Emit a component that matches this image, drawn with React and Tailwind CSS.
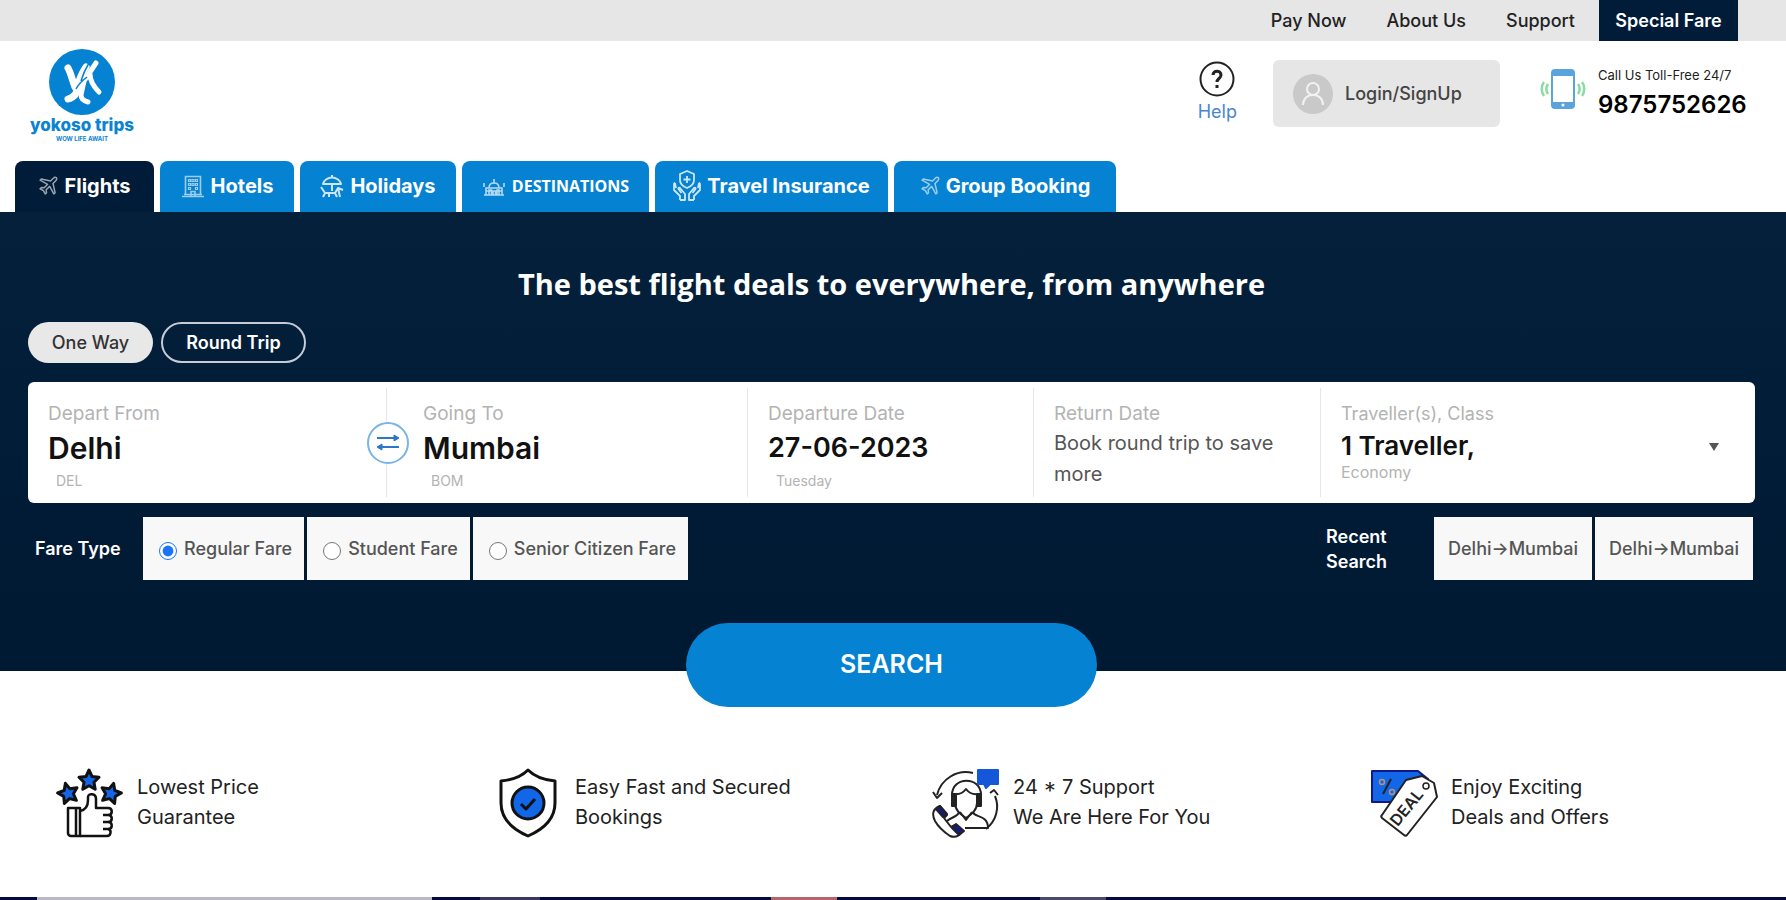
import { useState } from 'react';

const topLinks = ['Pay Now', 'About Us', 'Support'];

const tabs = [
  { label: 'Flights', icon: PlaneIcon, width: 'w-[139px]' },
  { label: 'Hotels', icon: HotelIcon, width: 'w-[134px]' },
  { label: 'Holidays', icon: HolidayIcon, width: 'w-[156px]' },
  { label: 'DESTINATIONS', icon: CityIcon, width: 'w-[187px]', narrow: true },
  { label: 'Travel Insurance', icon: InsuranceIcon, width: 'w-[233px]' },
  { label: 'Group Booking', icon: PlaneIcon, width: 'w-[222px]' },
];

const fares = ['Regular Fare', 'Student Fare', 'Senior Citizen Fare'];

const features = [
  { icon: ThumbIcon, lines: ['Lowest Price', 'Guarantee'] },
  { icon: ShieldIcon, lines: ['Easy Fast and Secured', 'Bookings'] },
  { icon: SupportIcon, lines: ['24 * 7 Support', 'We Are Here For You'] },
  { icon: DealIcon, lines: ['Enjoy Exciting', 'Deals and Offers'] },
];

function PlaneIcon() {
  return (
    <svg viewBox="0 0 24 24" className="w-5 h-5 shrink-0 opacity-60" fill="none" stroke="currentColor" strokeWidth="1.8" strokeLinejoin="round">
      <path d="M22 2c-1.200-.8-2.600-.3-3.600.7L15 6 4 3.500 2.500 5l9 5-4 4.200-3.500-.4L2.500 15.300l4 2.200 2.200 4 1.500-1.500-.4-3.500 4.200-4 5 9 1.500-1.500L18 9l3.300-3.400c1-1 1.500-2.400.7-3.600z" />
    </svg>
  );
}

function HotelIcon() {
  return (
    <svg viewBox="0 0 24 24" className="w-6 h-6 shrink-0 opacity-60" fill="none" stroke="currentColor" strokeWidth="1.6">
      <path d="M4.500 21V2.500h15V21M1 22.500h22M10 22v-4.500h4V22M3 20.500h18" />
      <path d="M7.500 5.500h2v2h-2zM11 5.500h2v2h-2zM14.500 5.500h2v2h-2zM7.500 9.500h2v2h-2zM11 9.500h2v2h-2zM14.500 9.500h2v2h-2zM7.500 13.500h2v2h-2zM14.500 13.500h2v2h-2z" strokeWidth="1.200" />
    </svg>
  );
}

function HolidayIcon() {
  return (
    <svg viewBox="0 0 24 24" className="w-6 h-6 shrink-0 opacity-80" fill="none" stroke="currentColor" strokeWidth="2" strokeLinejoin="round">
      <path d="M3 10c1-4 5-6.500 9-6.500s8 2.500 9 6.500zM12 1v3M12 10v7" />
      <path d="M1 13l4 6h10l3-5 5 2M5 19l-2 4M9 19v4M15 19l2 4M18 14l2 9" />
    </svg>
  );
}

function CityIcon() {
  return (
    <svg viewBox="0 0 24 24" className="w-6 h-6 shrink-0 opacity-70" fill="none" stroke="currentColor" strokeWidth="1.6">
      <path d="M2 21h20M4 21v-7h16v7M7 21v-5h2.500v5M11 21v-4h2.500v4M15 21v-5h2v5M4 17h16M7 14c0-3 2-5 5-5s5 2 5 5M12 9V5M2 13V9M22 13V9" />
    </svg>
  );
}

function InsuranceIcon() {
  return (
    <svg viewBox="0 0 28 32" className="w-7 h-8 shrink-0 opacity-80" fill="none" stroke="currentColor" strokeWidth="1.800" strokeLinejoin="round">
      <path d="M14 1l7 3v6c0 4-3 6.500-7 8-4-1.500-7-4-7-8V4zM14 6v7M10.500 9.500h7" />
      <path d="M2 13c-1 0-1 1-1 2v5l6 6v4M7 30h5v-6l-5-6c-1-1-2 0-1.500 1l3 4M2 13l1 5M26 13c1 0 1 1 1 2v5l-6 6v4M21 30h-5v-6l5-6c1-1 2 0 1.500 1l-3 4M26 13l-1 5" />
    </svg>
  );
}

function Logo() {
  return (
    <a href="#" className="flex flex-col items-center w-[108px] text-[#0a83d3]">
      <svg viewBox="0 0 66 66" className="w-[66px] h-[66px]" aria-hidden="true">
        <circle cx="33" cy="33" r="33" fill="#0682d3" />
        <g fill="none" stroke="#fff" strokeLinecap="round" strokeLinejoin="round">
          <path d="M19 19c3 5 4 12 7 19M37 18c-4 6-7 12-8 19-1 7-3 11-10 13" strokeWidth="7" />
          <path d="M47 14L35 32l-3 14M32 46c0 4 3 6 7 7M41 25c0 7 3 12 9 18" strokeWidth="5" />
        </g>
        <path d="M40 14c-3 5-6 11-8 18M27 40c2-4 7-9 11-12" fill="none" stroke="#0682d3" strokeWidth="1.500" />
      </svg>
      <span className="text-[17px] leading-[20px] font-extrabold whitespace-nowrap">yokoso trips</span>
      <span className="text-[6px] leading-[8px] font-bold whitespace-nowrap">WOW LIFE AWAIT</span>
    </a>
  );
}

function PhoneIcon() {
  return (
    <svg viewBox="0 0 46 42" className="w-[46px] h-[42px] shrink-0" fill="none" aria-hidden="true">
      <rect x="12" y="2" width="22" height="38" rx="3" stroke="#5ba3dc" strokeWidth="2" />
      <path d="M12 5a3 3 0 013-3h16a3 3 0 013 3v3H12zM12 34h22v3a3 3 0 01-3 3H15a3 3 0 01-3-3z" fill="#5ba3dc" />
      <circle cx="23" cy="37" r="1.500" fill="#fff" />
      <path d="M8 16c-2 3-2 7 0 10M4 14c-3 4-3 10 0 14M38 16c2 3 2 7 0 10M42 14c3 4 3 10 0 14" stroke="#8adca0" strokeWidth="2.500" />
    </svg>
  );
}

function ThumbIcon() {
  const star = 'M0-10l3 6.500 7 .8-5 4.900 1.200 7L0 5.800-6.200 9.200-5 2.200-10-2.700l7-.8z';
  return (
    <svg viewBox="0 0 68 70" className="w-[68px] h-[70px] shrink-0" fill="none" stroke="#111" strokeWidth="2.500" strokeLinejoin="round" aria-hidden="true">
      <g fill="#1266e8" strokeWidth="3">
        <path d={star} transform="translate(33 12)" />
        <path d={star} transform="translate(12 25) rotate(-15)" />
        <path d={star} transform="translate(55 25) rotate(15)" />
      </g>
      <path d="M12 40h12v28H15a3 3 0 01-3-3zM20 40v28" />
      <path d="M24 43c5-1 8-5 8-11v-3c0-4 8-4 8 2v9h12c5 0 5 7 0 7 5 0 5 7 0 7 5 0 5 7 0 7 4 1 3 7-1 7H24M47 47h5M47 54h5M47 61h5" />
    </svg>
  );
}

function ShieldIcon() {
  return (
    <svg viewBox="0 0 60 70" className="w-[60px] h-[70px] shrink-0" fill="none" stroke="#111" strokeWidth="3" strokeLinejoin="round" aria-hidden="true">
      <path d="M30 2c7 7 16 10 27 11v22c0 15-11 26-27 33C14 61 3 50 3 35V13C14 12 23 9 30 2z" />
      <circle cx="30" cy="35" r="16" fill="#1266e8" />
      <path d="M23 36l5 5 9-10" />
    </svg>
  );
}

function SupportIcon() {
  return (
    <svg viewBox="0 0 70 70" className="w-[70px] h-[70px] shrink-0" fill="none" stroke="#222" strokeWidth="2" strokeLinejoin="round" aria-hidden="true">
      <path d="M42 5C26 1 10 11 6 27M2 24l4 6 5-5M64 28c5 12 1 25-9 33M59 25l4-3 4 5" />
      <path d="M21 33v-6c0-19 29-19 29 0v6M22 26c5 1 10-1 13-5 3 4 8 6 13 5" />
      <path d="M24 27v8c0 7 5 11 11 15 6-4 11-8 11-15v-8" />
      <path d="M21 26h4v12h-4zM46 26h4v12h-4z" fill="#222" />
      <path d="M28 44c-1 5-8 5-12 9M42 44c1 6 15 2 15 16H34M29 44l6 8 6-8" />
      <path d="M9 38c-8 3-8 9-5 15 4 7 9 11 15 15 5 2 9 0 12-4l-7-7-4 2-7-9 3-3z" fill="#fff" />
      <path d="M5 41l4-3 7 8-4 3zM21 60l4-4 8 7-5 4z" fill="#131b82" />
      <path d="M47 2h20v14h-8l-4 4-2-4h-6z" fill="#1457d8" stroke="#1457d8" />
    </svg>
  );
}

function DealIcon() {
  return (
    <svg viewBox="0 0 70 70" className="w-[70px] h-[70px] shrink-0" fill="none" stroke="#222" strokeWidth="1.500" strokeLinejoin="round" aria-hidden="true">
      <path d="M3 3h46l10 8v23H3z" fill="#1266e8" stroke="#10188a" strokeWidth="2" />
      <path d="M22 11L14 26" strokeWidth="2" />
      <circle cx="13" cy="14" r="2.500" stroke="#b8917c" />
      <circle cx="23" cy="24" r="2.500" stroke="#b8917c" />
      <path d="M37 12l16-4 12 7 3 14-30 38c-1 1-2 1-3 0L13 50c-1-1-1-2 0-3z" fill="#fff" strokeWidth="2" />
      <circle cx="57" cy="18" r="3" />
      <text x="42" y="43" transform="rotate(-51 42 43)" textAnchor="middle" fontSize="16" fontWeight="600" fill="#222" stroke="none">DEAL</text>
    </svg>
  );
}

function Field({ label, value, sub, className = '', size = 'text-[30px]' }) {
  return (
    <label className={`flex flex-col my-1.5 pt-4 pl-5 border-r border-gray-200 min-w-0 ${className}`}>
      <span className="text-[19px] leading-[20px] text-[#b3b3b3]">{label}</span>
      <input className={`w-full mt-2 leading-[32px] h-8 font-semibold text-[#111] outline-none ${size}`} defaultValue={value} />
      <span className="pl-2 mt-2 text-[14px] leading-[18px] text-[#b3b3b3]">{sub}</span>
    </label>
  );
}

export default function App() {
  const [tab, setTab] = useState('Flights');
  const [trip, setTrip] = useState('One Way');

  return (
    <div className="min-h-screen overflow-hidden bg-white font-['Inter',sans-serif] text-[#222]">
      <div className="flex items-center justify-end h-[41px] pr-12 bg-[#e6e6e6] text-[18px] font-medium">
        <nav className="flex gap-10 pr-6">
          {topLinks.map(link => (
            <a key={link} href="#" className="whitespace-nowrap">{link}</a>
          ))}
        </nav>
        <a href="#" className="flex items-center justify-center w-[139px] h-full bg-[#011c38] text-white font-semibold">
          Special Fare
        </a>
      </div>

      <header className="flex items-start justify-between h-[120px] pl-7 pr-9 pt-2">
        <Logo />
        <div className="flex items-start pt-[11px]">
          <a href="#" className="flex flex-col items-center text-[18px] leading-[20px] text-[#4a86cf]">
            <svg viewBox="0 0 36 38" className="w-9 h-[38px]" fill="none" stroke="#222" aria-hidden="true">
              <circle cx="18" cy="19" r="16.500" strokeWidth="2" />
              <path d="M14 15c0-5 8-5 8 0 0 3.500-4 3.500-4 7M18 25v3" strokeWidth="3" />
            </svg>
            <span className="mt-1">Help</span>
          </a>
          <button className="flex items-center gap-3 w-[227px] h-[67px] ml-9 pl-5 rounded-md bg-[#e6e6e6] text-[18px] font-medium text-[#444]">
            <svg viewBox="0 0 40 40" className="w-10 h-10" fill="none" stroke="#f2f2f2" strokeWidth="2" aria-hidden="true">
              <circle cx="20" cy="20" r="20" fill="#c9c9c9" stroke="none" />
              <circle cx="20" cy="15" r="6" />
              <path d="M10 31c0-6 4-10 10-10s10 4 10 10" />
            </svg>
            Login/SignUp
          </button>
          <div className="flex items-start gap-3 ml-10 pt-2">
            <PhoneIcon />
            <div className="w-[152px] whitespace-nowrap">
              <p className="text-[13px] leading-[14px]">Call Us Toll-Free 24/7</p>
              <p className="mt-2 text-[24px] leading-[30px] font-semibold text-black">9875752626</p>
            </div>
          </div>
        </div>
      </header>

      <nav className="flex gap-1.5 pl-[15px]">
        {tabs.map(({ label, icon: Icon, width, narrow }) => (
          <button
            key={label}
            onClick={() => setTab(label)}
            className={`flex items-center justify-center gap-1.5 h-[51px] pb-0.5 rounded-t-lg text-white font-bold whitespace-nowrap ${width} ${
              narrow ? "font-['Open_Sans'] text-[16px]" : 'text-[20px]'
            } ${tab === label ? 'bg-[#011c38]' : 'bg-[#0682d3]'}`}
          >
            <Icon />
            <span>{label}</span>
          </button>
        ))}
      </nav>

      <section className="h-[459px] pl-7 pr-[31px] pt-12 bg-gradient-to-b from-[#04203b] to-[#001933]">
        <h1 className="text-center font-['Open_Sans',sans-serif] text-[29px] leading-[48px] font-bold text-white">
          The best flight deals to everywhere, from anywhere
        </h1>

        <div className="flex gap-2 mt-3.5">
          {['One Way', 'Round Trip'].map(name => (
            <button
              key={name}
              onClick={() => setTrip(name)}
              className={`h-[41px] rounded-full text-[18px] ${name === 'One Way' ? 'w-[125px]' : 'w-[145px]'} ${
                trip === name ? 'bg-[#e8e8e8] text-[#333] font-medium' : 'border-2 border-[#c6cbd6] text-white font-semibold'
              }`}
            >
              {name}
            </button>
          ))}
        </div>

        <form className="grid grid-cols-[359fr_361fr_286fr_287fr_434fr] h-[121px] mt-[19px] rounded-md bg-white">
          <Field label="Depart From" value="Delhi" sub="DEL" />
          <div className="relative flex">
            <button type="button" aria-label="Swap cities" className="absolute -left-5 top-10 flex items-center justify-center w-[42px] h-[42px] rounded-full border-2 border-[#79b4e4] bg-white">
              <svg viewBox="0 0 24 20" className="w-6 h-5" fill="none" stroke="#2b78c5" strokeWidth="2" aria-hidden="true">
                <path d="M1 5h18M23 14H5" />
                <path d="M18 2l5 3-5 3zM6 11l-5 3 5 3z" fill="#2b78c5" strokeWidth="1" />
              </svg>
            </button>
            <Field label="Going To" value="Mumbai" sub="BOM" className="w-full pl-9" />
          </div>
          <Field label="Departure Date" value="27-06-2023" sub="Tuesday" size="text-[27px]" />
          <div className="my-1.5 pt-4 pl-5 border-r border-gray-200">
            <p className="text-[19px] leading-[20px] text-[#b3b3b3]">Return Date</p>
            <p className="mt-1 text-[20px] leading-[31px] text-[#555]">Book round trip to save more</p>
          </div>
          <div className="flex items-center justify-between my-1.5 pl-5 pr-9">
            <div className="self-start pt-4">
              <p className="text-[18px] leading-[20px] text-[#b3b3b3]">Traveller(s), Class</p>
              <p className="mt-1.5 text-[26px] leading-[32px] font-semibold text-[#111]">1 Traveller,</p>
              <p className="text-[16px] leading-[20px] text-[#b3b3b3]">Economy</p>
            </div>
            <svg viewBox="0 0 10 8" className="w-2.5 h-2 mt-2" fill="#555" aria-hidden="true">
              <path d="M0 0h10L5 8z" />
            </svg>
          </div>
        </form>

        <div className="flex items-center justify-between mt-3.5 pl-[7px] pr-0.5">
          <fieldset className="flex items-center gap-[3px]">
            <span className="w-[105px] text-[18px] font-semibold text-white">Fare Type</span>
            {fares.map((fare, i) => (
              <label key={fare} className="flex items-center gap-[7px] h-[63px] pl-4 pr-3 bg-[#f8f8f8] text-[18px] font-medium text-[#555] whitespace-nowrap">
                <input type="radio" name="fare" defaultChecked={i === 0} className="w-[18px] h-[18px] mt-1 accent-[#1a73f8]" />
                {fare}
              </label>
            ))}
          </fieldset>
          <div className="flex items-center gap-[3px]">
            <p className="w-[105px] text-[18px] leading-[25px] font-semibold text-white">Recent<br />Search</p>
            {[1, 2].map(n => (
              <button key={n} className="w-[158px] h-[63px] bg-[#f8f8f8] text-[18px] font-medium text-[#555] whitespace-nowrap">
                Delhi→Mumbai
              </button>
            ))}
          </div>
        </div>

        <button className="block w-[411px] h-[84px] mx-auto mt-[43px] relative rounded-full bg-[#0682d3] text-[25px] font-semibold text-white">
          SEARCH
        </button>
      </section>

      <section className="grid grid-cols-4 h-[226px] pt-[97px] pl-[55px] -mr-[21px]">
        {features.map(({ icon: Icon, lines }) => (
          <div key={lines[0]} className="flex items-start gap-3">
            <div className="flex justify-center w-[70px]">
              <Icon />
            </div>
            <p className="pt-1 text-[20px] leading-[30px]">{lines[0]}<br />{lines[1]}</p>
          </div>
        ))}
      </section>

      <div className="flex h-[3px] bg-[#050b42]">
        <div className="w-[395px] ml-[37px] bg-[#b9b8c4]" />
        <div className="w-[60px] ml-12 bg-[#3a3563]" />
        <div className="w-[66px] ml-[231px] bg-[#b8646c]" />
        <div className="w-[66px] ml-[203px] bg-[#4c4a6c]" />
      </div>
    </div>
  );
}
